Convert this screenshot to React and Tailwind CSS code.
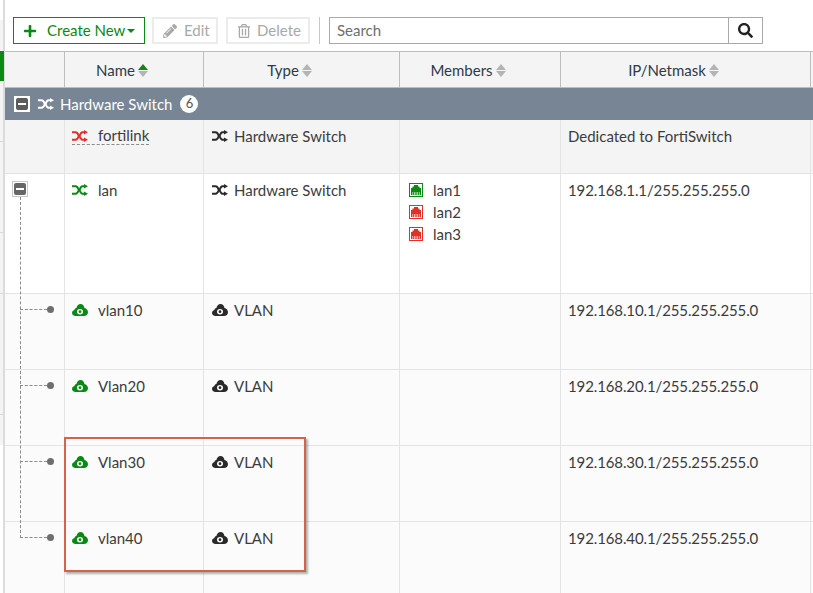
import React from 'react';
import { FaPlus, FaSearch, FaPencilAlt, FaRegTrashAlt } from 'react-icons/fa';

const cols = ['w-[60px]', 'w-[139px]', 'w-[196px]', 'w-[161px]', 'w-[250px]'];

const SwitchIcon = ({ color }) => (
  <svg width="16" height="12" viewBox="0 0 16 12" fill="none" className={`shrink-0 ${color}`}>
    <path d="M0 2.200h3.500c1.500 0 2.500 1.400 3.300 3.800-.8 2.400-1.800 3.800-3.300 3.800H0" stroke="currentColor" strokeWidth="2" />
    <path d="M13 2.200h-2.500c-1.200 0-2.100 1.400-2.900 3.800.8 2.400 1.700 3.800 2.900 3.800H13" stroke="currentColor" strokeWidth="2" />
    <path d="M12 0l4 2.200-4 2.200zM12 7.600l4 2.200-4 2.200z" fill="currentColor" />
  </svg>
);

const CloudIcon = ({ color }) => (
  <svg width="16" height="12" viewBox="0 0 16 13" preserveAspectRatio="none" className={`shrink-0 ${color}`}>
    <path d="M3.500 13C1.500 13 0 11.600 0 9.800 0 8.200 1 7 2.400 6.600 2.500 5.300 3.500 4.500 4.400 4.400 4.800 1.800 6.400 0 8.500 0c2.300 0 3.800 1.900 3.900 4.400C14.500 4.900 16 6.700 16 9c0 2.300-1.700 4-4 4z" fill="currentColor" />
    <circle cx="8" cy="8.300" r="3" fill="#fff" />
    <circle cx="8" cy="8.300" r="1.400" fill="currentColor" />
  </svg>
);

const PortIcon = ({ up }) => (
  <span className={`flex w-[14px] h-[14px] items-center justify-center border ${up ? 'border-[#0a8a14]' : 'border-[#e0302a]'} bg-white`}>
    <svg width="10" height="10" viewBox="0 0 10 10" className={up ? 'text-[#0a8a14]' : 'text-[#e0302a]'}>
      <path d="M3 0h4v1.500h1.500V3H10v7H0V3h1.500V1.500H3z" fill="currentColor" />
      <path d="M1.500 7h.6v3h-.6zM3.200 7h.6v3h-.6zM4.700 7h.6v3h-.6zM6.200 7h.6v3h-.6zM7.900 7h.6v3h-.6z" fill="#fff" />
    </svg>
  </span>
);

const SortIcon = ({ active }) => (
  <span className="flex flex-col gap-[1px] ml-[3px]">
    <span className={`w-0 h-0 border-x-[5px] border-x-transparent border-b-[6px] ${active ? 'border-b-[#0a8a14]' : 'border-b-[#b4b4b4]'}`} />
    <span className="w-0 h-0 border-x-[5px] border-x-transparent border-t-[6px] border-t-[#b4b4b4]" />
  </span>
);

const Cell = ({ i, children, className = '' }) => (
  <div className={`${cols[i]} shrink-0 h-full border-r border-[#e4e4e4] ${className}`}>{children}</div>
);

const NameCell = ({ icon, children }) => (
  <div className="flex items-center gap-[10px] pl-[7px] pt-[5px] h-[22px] box-content">
    {icon}
    {children}
  </div>
);

const TypeCell = ({ icon, children }) => (
  <div className="flex items-center gap-[6px] pl-[8px] pt-[5px] h-[22px] box-content">
    {icon}
    {children}
  </div>
);

const vlans = [
  ['vlan10', '192.168.10.1/255.255.255.0'],
  ['Vlan20', '192.168.20.1/255.255.255.0'],
  ['Vlan30', '192.168.30.1/255.255.255.0'],
  ['vlan40', '192.168.40.1/255.255.255.0'],
];

const headers = [['Name', true], ['Type'], ['Members'], ['IP/Netmask']];

export default function App() {
  return (
    <div className="relative w-[813px] h-[593px] overflow-hidden bg-white text-[15px] text-[#3c3c3c] font-['Lato',sans-serif]">
      {/* side strip */}
      <div className="absolute left-0 top-0 w-[5px] h-full border-r-2 border-[#dcdcdc]">
        <div className="absolute left-0 top-[20px] w-[3px] h-[425px] bg-[#f4f4f4]" />
        {[141, 232, 293, 414].map(y => (
          <div key={y} className="absolute left-0 w-[3px] h-px bg-[#d8d8d8]" style={{ top: y }} />
        ))}
      </div>
      <div className="absolute left-0 top-[51px] w-[4px] h-[30px] bg-[#0a8a14]" />

      {/* toolbar */}
      <div className="flex items-center h-[51px] pl-[13px] pt-[10px]">
        <button className="flex items-center w-[132px] h-[27px] pl-[9px] border border-[#0a8a14] text-[#0a8a14]">
          <FaPlus size={14} className="mr-[10px]" />
          Create New
          <span className="ml-[2px] w-0 h-0 border-x-[4px] border-x-transparent border-t-[4px] border-t-[#0a8a14]" />
        </button>
        <button className="flex items-center ml-[7px] w-[66px] h-[27px] pl-[9px] border-2 border-[#ececec] text-[#a8a8a8]">
          <FaPencilAlt size={14} className="mr-[7px]" />
          Edit
        </button>
        <button className="flex items-center ml-[8px] w-[84px] h-[27px] pl-[9px] border-2 border-[#ececec] text-[#a8a8a8]">
          <FaRegTrashAlt size={14} className="mr-[6px]" />
          Delete
        </button>
        <div className="ml-[9px] w-px h-[27px] bg-[#c8c8c8]" />
        <div className="flex ml-[9px] w-[434px] h-[27px] border border-[#a9a9a9]">
          <div className="flex-1 pl-[7px] leading-[25px] text-[#6e6e6e]">Search</div>
          <div className="flex items-center justify-center w-[34px] border-l border-[#a9a9a9] text-[#222]">
            <FaSearch size={15} />
          </div>
        </div>
      </div>

      {/* table */}
      <div className="ml-[4px] w-[809px] pl-px">
        <div className="flex h-[37px] bg-[#f4f4f4] border-y border-[#bdbdbd]">
          <div className="w-[60px] shrink-0 border-r border-[#bdbdbd]" />
          {headers.map(([label, active], i) => (
            <div key={label} className={`${cols[i + 1]} shrink-0 flex items-center justify-center pt-[1px] pr-[24px] border-r border-[#bdbdbd] text-[#2e3a47]`}>
              {label}
              <SortIcon active={active} />
            </div>
          ))}
        </div>

        <div className="flex items-center h-[32px] bg-[#778594] text-white pl-[9px]">
          <span className="flex items-center justify-center w-[16px] h-[16px] bg-white">
            <span className="flex items-center justify-center w-[12px] h-[12px] rounded-[2px] bg-[#5c5c5c]">
              <span className="w-[8px] h-[2px] bg-white" />
            </span>
          </span>
          <span className="ml-[8px]"><SwitchIcon color="text-white" /></span>
          <span className="ml-[6px]">Hardware Switch</span>
          <span className="flex items-center justify-center ml-[8px] w-[18px] h-[18px] rounded-full bg-white text-[#555] text-[13px]">6</span>
        </div>

        <div className="flex h-[54px] bg-[#f4f4f4] border-b border-[#e4e4e4]">
          <Cell i={0} />
          <Cell i={1}>
            <div className="flex pl-[7px] pt-[7px]">
              <div className="flex items-center gap-[10px] h-[18px] border-b border-dashed border-[#8a8a8a]">
                <SwitchIcon color="text-[#e0302a]" />
                fortilink
              </div>
            </div>
          </Cell>
          <Cell i={2}><TypeCell icon={<SwitchIcon color="text-[#2a2a2a]" />}>Hardware Switch</TypeCell></Cell>
          <Cell i={3} />
          <Cell i={4} className="pl-[7px] pt-[5px] leading-[22px]">Dedicated to FortiSwitch</Cell>
        </div>

        <div className="flex h-[120px] bg-white border-b border-[#e4e4e4]">
          <Cell i={0} />
          <Cell i={1}><NameCell icon={<SwitchIcon color="text-[#0a8a14]" />}>lan</NameCell></Cell>
          <Cell i={2}><TypeCell icon={<SwitchIcon color="text-[#2a2a2a]" />}>Hardware Switch</TypeCell></Cell>
          <Cell i={3} className="pl-[9px] pt-[5px]">
            {['lan1', 'lan2', 'lan3'].map((p, i) => (
              <div key={p} className="flex items-center gap-[10px] h-[22px]">
                <PortIcon up={i === 0} />
                {p}
              </div>
            ))}
          </Cell>
          <Cell i={4} className="pl-[7px] pt-[5px] leading-[22px] tracking-[-0.12px]">192.168.1.1/255.255.255.0</Cell>
        </div>

        {vlans.map(([name, ip]) => (
          <div key={name} className="flex h-[76px] bg-[#fbfbfb] border-b border-[#e4e4e4]">
            <Cell i={0} />
            <Cell i={1}><NameCell icon={<CloudIcon color="text-[#0a8a14]" />}>{name}</NameCell></Cell>
            <Cell i={2}><TypeCell icon={<CloudIcon color="text-[#2a2a2a]" />}>VLAN</TypeCell></Cell>
            <Cell i={3} />
            <Cell i={4} className="pl-[7px] pt-[5px] leading-[22px] tracking-[-0.12px]">{ip}</Cell>
          </div>
        ))}
      </div>

      {/* tree lines over the first column */}
      <div className="absolute left-[12px] top-[181px] flex items-center justify-center w-[16px] h-[16px] border border-[#c8c8c8] bg-white">
        <span className="flex items-center justify-center w-[12px] h-[12px] rounded-[2px] bg-[#666]">
          <span className="w-[8px] h-[2px] bg-white" />
        </span>
      </div>
      <div className="absolute left-[20px] top-[197px] h-[341px] border-l border-dashed border-[#8c8c8c]" />
      {[309, 385, 461, 537].map(y => (
        <div key={y} className="absolute left-[20px] flex items-center" style={{ top: y - 3 }}>
          <div className="w-[27px] border-t border-dashed border-[#8c8c8c]" />
          <div className="w-[7px] h-[7px] rounded-full bg-[#6e6e6e]" />
        </div>
      ))}

      {/* annotation */}
      <div className="absolute left-[64px] top-[437px] w-[242px] h-[135px] border-2 border-[#d2644a] shadow-[2px_2px_2px_rgba(0,0,0,0.3)]" />
    </div>
  );
}
